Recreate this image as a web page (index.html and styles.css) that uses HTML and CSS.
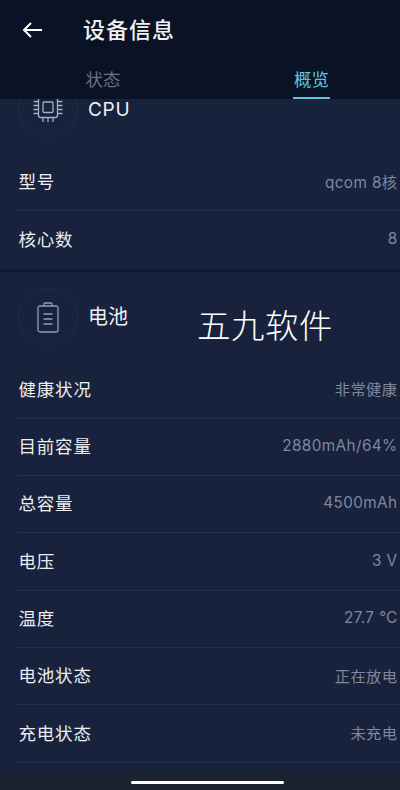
FILE: index.html
```html
<!DOCTYPE html>
<html lang="zh-CN">
<head>
    <meta charset="UTF-8">
    <meta name="viewport" content="width=device-width, initial-scale=1.0">
    <title>设备信息</title>
    <link rel="stylesheet" href="styles.css">
</head>
<body>
    <div class="screen">
        <header class="top-bar">
            <div class="title-row">
                <svg class="back-icon" width="20" height="16" viewBox="0 0 20 16" fill="none" stroke="#fff" stroke-width="2">
                    <path d="M20 8H2M9 1L2 8l7 7"/>
                </svg>
                <h1>设备信息</h1>
            </div>
            <div class="tabs">
                <div class="tab">状态</div>
                <div class="tab active">概览</div>
            </div>
        </header>

        <main class="content">
            <section class="card card-cpu">
                <div class="card-head">
                    <div class="icon-ring">
                        <svg width="32" height="32" viewBox="0 0 32 32" fill="none" stroke="#a2aec6" stroke-width="1.3">
                            <rect x="6.5" y="4.5" width="19" height="20" rx="2"/>
                            <rect x="11" y="9" width="10" height="10.5" rx="1"/>
                            <path d="M1.5 8.5h5M1.5 12.5h5M1.5 16.5h5M1.5 20.5h5M25.5 8.5h5M25.5 12.5h5M25.5 16.5h5M25.5 20.5h5M11 24.5v4.5M16 24.5v4.5M21 24.5v4.5"/>
                        </svg>
                    </div>
                    <span class="card-title card-title-latin">CPU</span>
                </div>
                <div class="row"><span class="label">型号</span><span class="value">qcom 8核</span></div>
                <div class="row"><span class="label">核心数</span><span class="value">8</span></div>
            </section>

            <section class="card">
                <div class="card-head">
                    <div class="icon-ring">
                        <svg class="battery-icon" width="24" height="34" viewBox="0 0 24 34" fill="none" stroke="#8e9ab4" stroke-width="1.3">
                            <rect x="2" y="5" width="20" height="26" rx="2"/>
                            <path d="M8 5V3a1 1 0 0 1 1-1h6a1 1 0 0 1 1 1v2M7.5 13h9M7.5 18h9M7.5 23h9"/>
                        </svg>
                    </div>
                    <span class="card-title">电池</span>
                    <span class="watermark">五九软件</span>
                </div>
                <div class="row"><span class="label">健康状况</span><span class="value">非常健康</span></div>
                <div class="row"><span class="label">目前容量</span><span class="value">2880mAh/64%</span></div>
                <div class="row"><span class="label">总容量</span><span class="value">4500mAh</span></div>
                <div class="row"><span class="label">电压</span><span class="value">3 V</span></div>
                <div class="row"><span class="label">温度</span><span class="value">27.7 ℃</span></div>
                <div class="row"><span class="label">电池状态</span><span class="value">正在放电</span></div>
                <div class="row"><span class="label">充电状态</span><span class="value">未充电</span></div>
            </section>
        </main>

        <div class="home-bar"><div class="home-pill"></div></div>
    </div>
</body>
</html>
```

FILE: styles.css
```css
html, body {
    margin: 0;
    padding: 0;
    height: 100%;
    background: #18223c;
    font-family: Inter, "Noto Sans CJK SC", sans-serif;
}
.screen {
    height: 790px;
    display: flex;
    flex-direction: column;
    overflow: hidden;
}
.top-bar {
    height: 99px;
    flex-shrink: 0;
    background: #0a1325;
}
.title-row {
    height: 59px;
    display: flex;
    align-items: center;
    padding-left: 22px;
}
.back-icon {
    flex-shrink: 0;
}
.title-row h1 {
    margin: 0 0 4px 41px;
    font-size: 22px;
    font-weight: 500;
    letter-spacing: 1px;
    color: #f0f1f3;
}
.tabs {
    height: 40px;
    display: flex;
    padding-left: 85px;
}
.tab {
    width: 36px;
    height: 40px;
    box-sizing: border-box;
    padding-top: 9px;
    font-size: 17.5px;
    line-height: 24px;
    text-align: center;
    white-space: nowrap;
    color: #69707f;
}
.tab.active {
    margin-left: 172px;
    width: 37px;
    color: #5cc4dc;
    border-bottom: 2px solid #5cc4dc;
}
.content {
    flex: 1;
    min-height: 0;
    overflow: hidden;
}
.card {
    background: #18223c;
    padding-left: 18px;
}
.card-cpu {
    margin-top: -35px;
    border-bottom: 3px solid #101930;
}
.card-cpu .row:last-child {
    border-bottom: none;
}
.card-head {
    height: 90px;
    display: flex;
    align-items: center;
    position: relative;
}
.icon-ring {
    width: 60px;
    height: 56px;
    box-sizing: border-box;
    display: flex;
    align-items: center;
    justify-content: center;
    border: 1px solid #212c46;
    border-radius: 50%;
}
.battery-icon {
    margin-top: 2px;
}
.card-title {
    margin: 0 0 3px 10px;
    font-size: 20px;
    color: #eef0f3;
}
.card-title-latin {
    margin-bottom: 0;
    font-size: 19px;
    letter-spacing: 0.7px;
}
.watermark {
    position: absolute;
    left: 179px;
    top: 32px;
    font-size: 33.5px;
    line-height: 44px;
    font-weight: 300;
    letter-spacing: 0.5px;
    color: #fff;
}
.row {
    height: 57.3px;
    box-sizing: border-box;
    display: flex;
    align-items: center;
    justify-content: space-between;
    padding: 0 2.5px 3px 0;
    border-bottom: 1px solid #27314a;
}
.label {
    font-size: 17.5px;
    letter-spacing: 0.8px;
    margin-left: 0.5px;
    color: #eceef1;
}
.value {
    font-size: 15.3px;
    letter-spacing: 0.4px;
    color: #7f879e;
}
.home-bar {
    position: absolute;
    left: 0;
    right: 0;
    top: 772px;
    height: 18px;
    background: #1b2330;
}
.home-pill {
    position: absolute;
    left: 131px;
    top: 9px;
    width: 153px;
    height: 3px;
    border-radius: 2px;
    background: #fff;
}
```
